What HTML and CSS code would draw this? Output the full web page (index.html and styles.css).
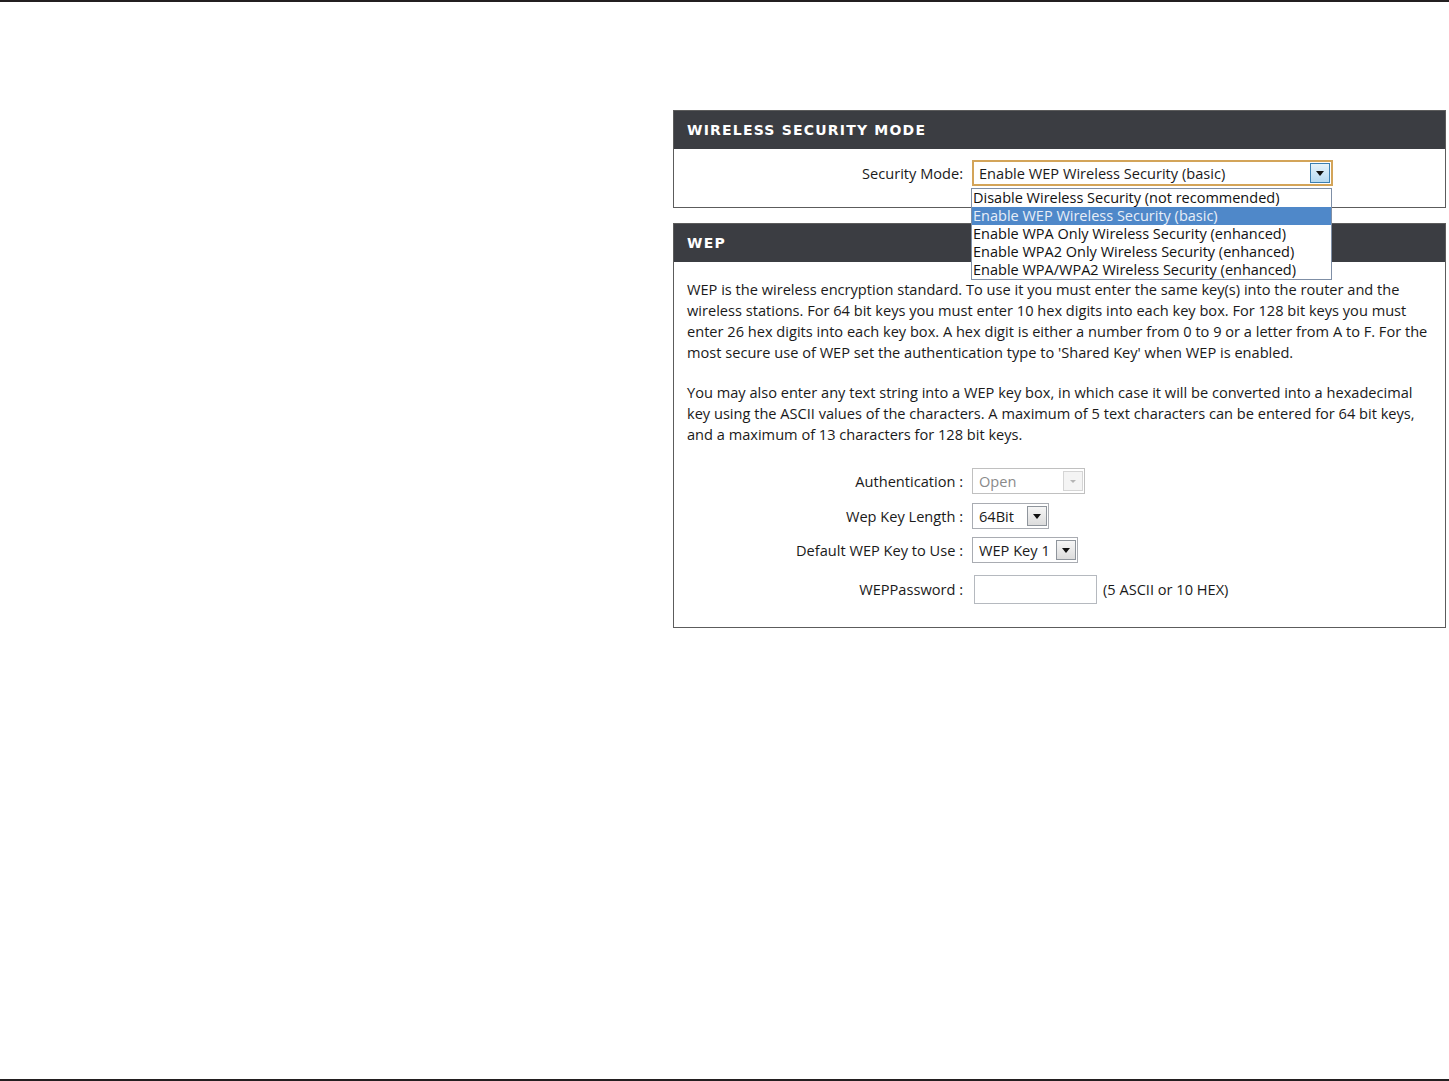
FILE: index.html
```html
<!DOCTYPE html>
<html lang="en">
<head>
  <meta charset="UTF-8">
  <title>Wireless Security</title>
  <link rel="stylesheet" href="styles.css">
</head>
<body>
  <div class="page">
    <div class="box">
      <div class="box-title">WIRELESS SECURITY MODE</div>
      <div class="box-body mode-body">
        <div class="row">
          <label class="lbl">Security Mode:</label>
          <div class="combo-wrap">
            <div class="combo focus wide">
              <span class="val">Enable WEP Wireless Security (basic)</span>
              <span class="arrow blue"><svg width="10" height="6" viewBox="0 0 10 6"><path d="M1 0h8L5 5z" fill="#111"/></svg></span>
            </div>
            <ul class="droplist">
              <li>Disable Wireless Security (not recommended)</li>
              <li class="sel">Enable WEP Wireless Security (basic)</li>
              <li>Enable WPA Only Wireless Security (enhanced)</li>
              <li>Enable WPA2 Only Wireless Security (enhanced)</li>
              <li>Enable WPA/WPA2 Wireless Security (enhanced)</li>
            </ul>
          </div>
        </div>
      </div>
    </div>

    <div class="box">
      <div class="box-title">WEP</div>
      <div class="box-body wep-body">
        <p>WEP is the wireless encryption standard. To use it you must enter the same key(s) into the router and the wireless stations. For 64 bit keys you must enter 10 hex digits into each key box. For 128 bit keys you must enter 26 hex digits into each key box. A hex digit is either a number from 0 to 9 or a letter from A to F. For the most secure use of WEP set the authentication type to 'Shared Key' when WEP is enabled.</p>
        <p>You may also enter any text string into a WEP key box, in which case it will be converted into a hexadecimal key using the ASCII values of the characters. A maximum of 5 text characters can be entered for 64 bit keys, and a maximum of 13 characters for 128 bit keys.</p>

        <div class="form">
          <div class="row">
            <label class="lbl">Authentication :</label>
            <div class="combo disabled auth">
              <span class="val">Open</span>
              <span class="arrow gray"><svg width="10" height="6" viewBox="0 0 10 6"><path d="M2 1h6L5 4z" fill="#b5b5b5"/></svg></span>
            </div>
          </div>
          <div class="row">
            <label class="lbl">Wep Key Length :</label>
            <div class="combo keylen">
              <span class="val">64Bit</span>
              <span class="arrow"><svg width="10" height="6" viewBox="0 0 10 6"><path d="M1 0h8L5 5z" fill="#111"/></svg></span>
            </div>
          </div>
          <div class="row">
            <label class="lbl">Default WEP Key to Use :</label>
            <div class="combo keyuse">
              <span class="val">WEP Key 1</span>
              <span class="arrow"><svg width="10" height="6" viewBox="0 0 10 6"><path d="M1 0h8L5 5z" fill="#111"/></svg></span>
            </div>
          </div>
          <div class="row pass-row">
            <label class="lbl">WEPPassword :</label>
            <input type="text" class="pass">
            <span class="hint">(5 ASCII or 10 HEX)</span>
          </div>
        </div>
      </div>
    </div>
  </div>
</body>
</html>
```

FILE: styles.css
```css
html, body {
  margin: 0;
  padding: 0;
  background: #fff;
}
body {
  font-family: "Open Sans", "Noto Sans", sans-serif;
  font-size: 14.6px;
  color: #1a1a1a;
}
.page {
  height: 1081px;
  box-sizing: border-box;
  border-top: 2px solid #231f20;
  border-bottom: 2px solid #231f20;
  padding: 108px 3px 0 673px;
}
.box {
  border: 1px solid #5c5c5c;
  margin-bottom: 15px;
}
.box-title {
  background: #3b3d42;
  color: #fff;
  height: 38px;
  line-height: 39px;
  padding-left: 13px;
  font-family: "DejaVu Sans", Verdana, sans-serif;
  font-weight: bold;
  font-size: 14px;
  letter-spacing: 1.2px;
}
.box-body {
  background: #fff;
}
.mode-body {
  height: 58px;
  padding-top: 11px;
  box-sizing: border-box;
}
.row {
  display: flex;
  align-items: center;
}
.lbl {
  width: 289px;
  text-align: right;
  padding-right: 9px;
  box-sizing: content-box;
}
.combo-wrap {
  position: relative;
}
.combo {
  display: flex;
  align-items: center;
  justify-content: space-between;
  height: 26px;
  box-sizing: border-box;
  border: 1px solid #a9acb2;
  background: #fff;
  padding: 0 1px 0 6px;
}
.combo.wide {
  width: 361px;
}
.combo.focus {
  border: 2px solid #d3a459;
  padding-left: 5px;
}
.arrow {
  width: 20px;
  height: 20px;
  box-sizing: border-box;
  border: 1px solid #8f959c;
  background: linear-gradient(#f6f6f6, #dcdcdc);
  display: flex;
  align-items: center;
  justify-content: center;
}
.arrow svg {
  margin-top: 2px;
}
.arrow.blue {
  border-color: #3c7fb1;
  background: linear-gradient(#e6f3fb, #b7daf1);
}
.arrow.gray {
  border-color: #d5d5d5;
  background: #f4f4f4;
}
.combo.disabled {
  color: #8a8a8a;
  border-color: #c0c0c0;
}
.combo.auth {
  width: 113px;
}
.combo.keylen {
  width: 77px;
}
.combo.keyuse {
  width: 106px;
}
.droplist {
  position: absolute;
  left: -1px;
  top: 28px;
  width: 361px;
  box-sizing: border-box;
  margin: 0;
  padding: 0;
  list-style: none;
  border: 1px solid #7f8fa6;
  background: #fff;
  font-size: 14.5px;
  color: #111;
  z-index: 5;
}
.droplist li {
  height: 18px;
  line-height: 18px;
  padding-left: 1px;
  white-space: nowrap;
}
.droplist li.sel {
  background: #4f88c9;
  color: #e8eef8;
}
.wep-body {
  height: 365px;
  box-sizing: border-box;
  padding: 17px 14px 0 13px;
}
.wep-body p {
  margin: 0 0 19px;
  line-height: 21px;
}
.form {
  margin-left: -13px;
  padding-top: 4px;
  display: flex;
  flex-direction: column;
  gap: 8.5px;
}
.pass-row {
  margin-top: 3px;
}
.pass-row .lbl {
  padding-right: 10px;
}
.pass {
  width: 123px;
  height: 29px;
  box-sizing: border-box;
  border: 1px solid #b5b9bf;
  margin: 0 0 0 1px;
}
.hint {
  margin-left: 6px;
}
```
